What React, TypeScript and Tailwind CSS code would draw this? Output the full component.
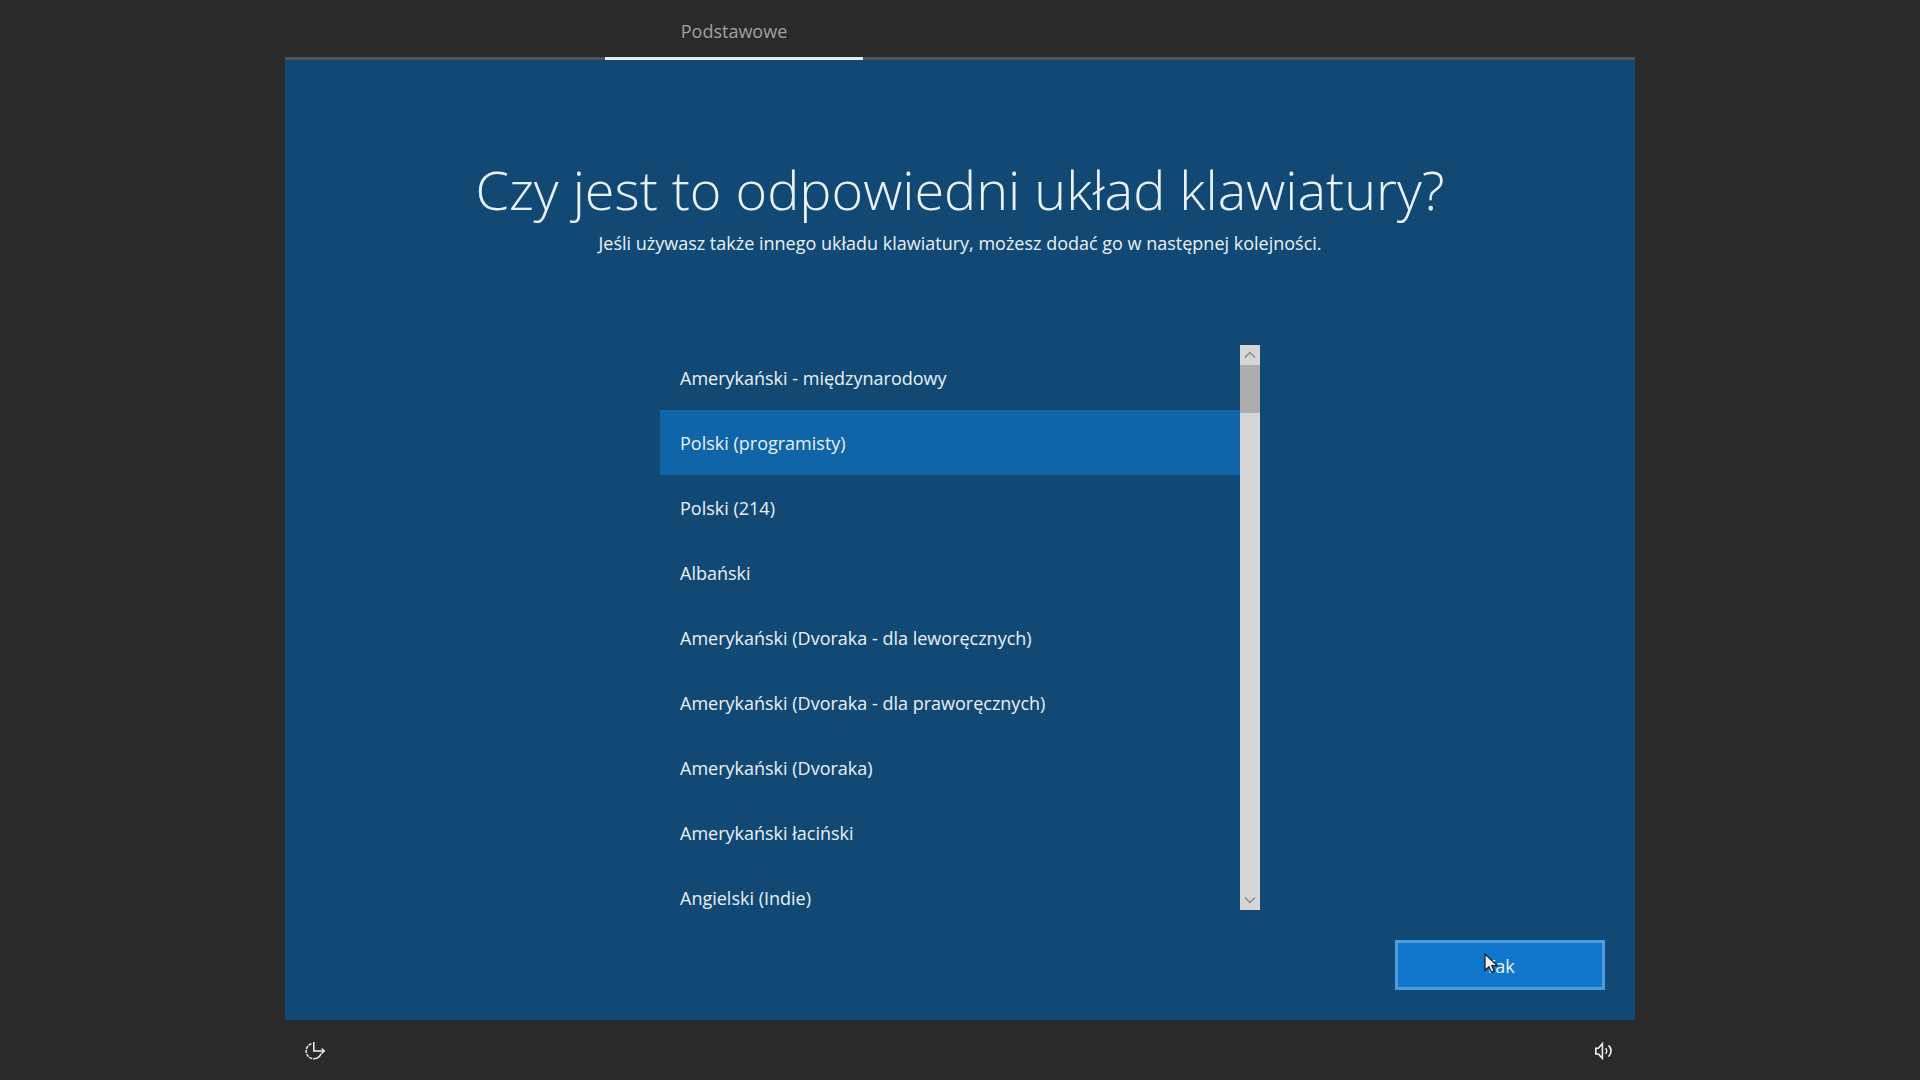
import { useRef, useState } from 'react'

const layouts = [
  'Amerykański - międzynarodowy',
  'Polski (programisty)',
  'Polski (214)',
  'Albański',
  'Amerykański (Dvoraka - dla leworęcznych)',
  'Amerykański (Dvoraka - dla praworęcznych)',
  'Amerykański (Dvoraka)',
  'Amerykański łaciński',
  'Angielski (Indie)',
]

function EaseOfAccessIcon() {
  return (
    <svg width="22" height="20" viewBox="0 0 22 20" fill="none" stroke="#f2f2f2" strokeWidth="1.5">
      <path d="M8.8 1v9h10.4" />
      <path d="M16.6 7.4l2.8 2.6-2.8 2.6" strokeWidth="1.3" />
      <path d="M6.4 2.8A7.7 7.7 0 0 0 8.8 17.8" strokeDasharray="3.2 0.9" />
      <path d="M8.8 17.8a7.7 7.7 0 0 0 7.3-5.2" />
    </svg>
  )
}

function VolumeIcon() {
  return (
    <svg width="20" height="18" viewBox="0 0 20 18" fill="none" stroke="#f2f2f2" strokeWidth="1.6">
      <path d="M.8 6.2h2.6L7.4 1.6v14.8L3.4 12H.8z" />
      <path d="M10.6 6.2c1.4 1.5 1.4 4.1 0 5.6" />
      <path d="M13.6 3.4c3.2 3 3.2 8.2 0 11.2" />
    </svg>
  )
}

function Pointer() {
  return (
    <svg className="pointer-events-none absolute left-[86px] top-[10px]" width="16" height="22" viewBox="0 0 16 22">
      <path
        d="M1 1v16.5l3.9-3.8 2.5 5.6 2.8-1.2-2.4-5.5h5.4z"
        fill="#f0f0f4"
        stroke="#0b1a30"
        strokeWidth="1.2"
      />
    </svg>
  )
}

function ScrollButton({ label, d, onClick }: { label: string; d: string; onClick: () => void }) {
  return (
    <button type="button" aria-label={label} onClick={onClick} className="flex h-5 w-5 items-center justify-center">
      <svg width="12" height="8" viewBox="0 0 12 8" fill="none" stroke="#858585" strokeWidth="1.3">
        <path d={d} />
      </svg>
    </button>
  )
}

export default function App() {
  const [selected, setSelected] = useState('Polski (programisty)')
  const listRef = useRef<HTMLDivElement>(null)

  const scrollList = (top: number) => {
    listRef.current?.scrollBy({ top })
  }

  return (
    <div className="flex min-h-screen flex-col bg-[#2a2a2a] font-['Open_Sans','Noto_Sans',sans-serif] text-[18px] text-[#eaf1fa]">
      <div className="mx-auto flex w-full max-w-[1350px] flex-1 flex-col">
        <nav className="flex h-[60px] border-b-3 border-[#4f5256] pl-80">
          <button type="button" className="-mb-[3px] w-[258px] border-b-3 border-[#e6edf7] pt-1.5 text-[#a0a0a0]">
            Podstawowe
          </button>
        </nav>

        <main className="flex flex-1 flex-col bg-[#124974] px-[30px] pb-[30px]">
          <header className="pt-[92px] text-center">
            <h1 className="pb-0.5 text-[54px] leading-[74px] font-light">Czy jest to odpowiedni układ klawiatury?</h1>
            <p className="leading-[30px]">
              Jeśli używasz także innego układu klawiatury, możesz dodać go w następnej kolejności.
            </p>
          </header>

          <div className="mx-auto mt-[87px] flex h-[565px] w-full max-w-[600px]">
            <div
              ref={listRef}
              role="listbox"
              aria-label="Układ klawiatury"
              className="flex-1 overflow-y-auto [scrollbar-width:none]"
            >
              {layouts.map((layout) => (
                <button
                  key={layout}
                  type="button"
                  role="option"
                  aria-selected={selected === layout}
                  onClick={() => setSelected(layout)}
                  className={`block h-[65px] w-full px-5 pt-0.5 text-left ${
                    selected === layout ? 'bg-[#1064a8]' : ''
                  }`}
                >
                  {layout}
                </button>
              ))}
            </div>
            <div className="flex w-5 flex-col bg-[#d6d6d6]">
              <ScrollButton label="W górę" d="M1 6.5l5-5 5 5" onClick={() => scrollList(-65)} />
              <div className="flex-1">
                <div className="h-12 bg-[#aeacaf]" />
              </div>
              <ScrollButton label="W dół" d="M1 1.5l5 5 5-5" onClick={() => scrollList(65)} />
            </div>
          </div>

          <div className="mt-auto flex justify-end">
            <button
              type="button"
              className="relative h-[50px] w-[210px] border-3 border-[#4d9bdb] bg-[#1177cc] pt-0.5"
            >
              Tak
              <Pointer />
            </button>
          </div>
        </main>

        <footer className="flex h-[60px] items-center justify-between px-5 pt-0.5">
          <button type="button" aria-label="Ułatwienia dostępu">
            <EaseOfAccessIcon />
          </button>
          <button type="button" aria-label="Głośność">
            <VolumeIcon />
          </button>
        </footer>
      </div>
    </div>
  )
}
